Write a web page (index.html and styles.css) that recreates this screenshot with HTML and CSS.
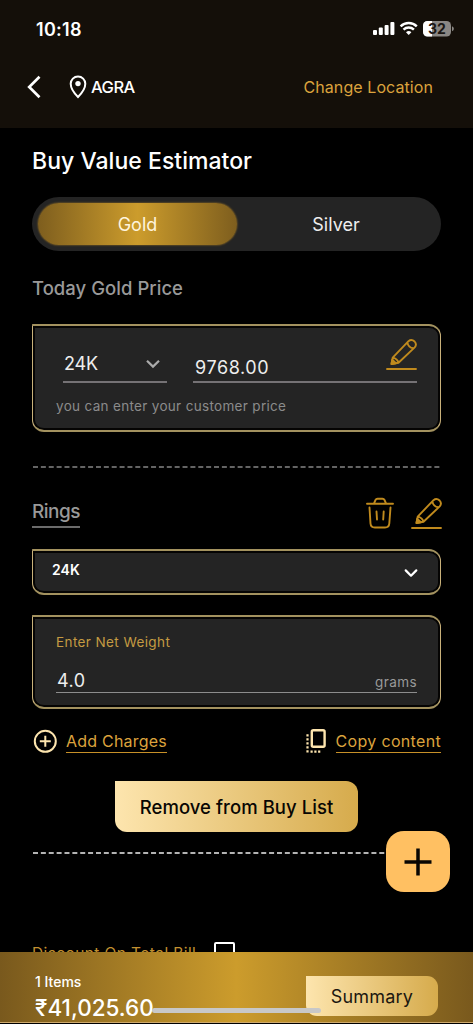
FILE: index.html
```html
<!DOCTYPE html>
<html lang="en">
<head>
<meta charset="utf-8">
<title>Buy Value Estimator</title>
<link rel="stylesheet" href="styles.css">
</head>
<body>
<div class="screen">
  <header class="top">
    <div class="status">
      <span class="time">10:18</span>
      <svg class="status-icons" width="82" height="18" viewBox="0 0 82 18">
        <g fill="#fff">
          <rect x="0" y="10" width="4" height="5" rx="1"/>
          <rect x="5.8" y="7.5" width="4" height="7.5" rx="1"/>
          <rect x="11.6" y="5" width="4" height="10" rx="1"/>
          <rect x="17.4" y="2" width="4" height="13" rx="1"/>
          <path d="M35.7 15 L33 12.3 A3.9 3.9 0 0 1 38.4 12.3 Z"/>
        </g>
        <path d="M30.5 9.6 A7.4 7.4 0 0 1 40.9 9.6 M27.6 6.3 A11.6 11.6 0 0 1 43.8 6.3" fill="none" stroke="#fff" stroke-width="2.4"/>
        <rect x="50" y="1" width="28" height="15.5" rx="4.5" fill="#8a8784"/>
        <path d="M54.5 1 H59 V16.500 H54.5 A4.500 4.500 0 0 1 50 12 V5.500 A4.500 4.500 0 0 1 54.5 1Z" fill="#fff"/>
        <path d="M79 6.300 A2.600 2.600 0 0 1 79 11.300Z" fill="#8a8784"/>
        <text class="battery" x="64" y="13.500" text-anchor="middle">32</text>
      </svg>
    </div>
    <div class="location">
      <svg class="back" width="14" height="24" viewBox="0 0 14 24"><path d="M12.500 1.800 L2.200 12 L12.500 22.200" fill="none" stroke="#fff" stroke-width="2.700"/></svg>
      <svg class="pin" width="18" height="24" viewBox="0 0 18 24"><path d="M9 22 C9 22 1.700 14.800 1.700 8.800 A7.300 7.300 0 0 1 16.300 8.800 C16.300 14.800 9 22 9 22Z" fill="none" stroke="#fff" stroke-width="2"/><circle cx="9" cy="8.600" r="2.700" fill="#fff"/></svg>
      <span class="city">AGRA</span>
      <span class="change">Change Location</span>
    </div>
  </header>

  <main class="content">
    <h1 class="title">Buy Value Estimator</h1>
    <div class="tabs">
      <div class="tab tab-active">Gold</div>
      <div class="tab">Silver</div>
    </div>
    <h2 class="subtitle">Today Gold Price</h2>

    <section class="card price-card">
      <div class="price-row">
        <div class="karat"><span>24K</span>
          <svg width="16" height="10" viewBox="0 0 16 10"><path d="M2 1.800 L8 7.600 L14 1.800" fill="none" stroke="#aaa" stroke-width="2.200"/></svg>
        </div>
        <div class="price"><span>9768.00</span>
          <svg class="pencil" width="31" height="32" viewBox="0 0 31 32"><use href="#pencil"/></svg>
        </div>
      </div>
      <p class="hint">you can enter your customer price</p>
    </section>

    <svg class="dash" width="409" height="2"><path d="M1 1 H409" stroke="#858585" stroke-width="1.700" stroke-dasharray="5 2.870"/></svg>

    <div class="item-head">
      <span class="item-name">Rings</span>
      <svg class="trash" width="28" height="32" viewBox="0 0 28 32" fill="none" stroke="#c08a1d" stroke-width="1.900" stroke-linecap="round" stroke-linejoin="round">
        <path d="M1 6.800 H27 M8 6.300 L9.500 3 Q10 1.800 11.500 1.800 H16.500 Q18 1.800 18.500 3 L20 6.300 M3.500 10.500 L4.500 26.500 Q4.800 30.500 8.800 30.500 H19 Q23 30.500 23.300 26.500 L24.500 10.500 M10.500 14.500 L11 22.500 M17.700 14.500 L17.200 22.500"/>
      </svg>
      <svg class="pencil" width="31" height="32" viewBox="0 0 31 32">
        <defs><g id="pencil" fill="none" stroke="#c08a1d" stroke-width="1.900" stroke-linecap="round" stroke-linejoin="round">
          <path d="M5.500 26 L6.700 19.600 L22.500 3.200 Q25.500 0.800 28.600 3.500 Q31.200 6.500 28.700 9.400 L12.500 24.700 Z M6.700 19.600 Q11.200 20.500 12.500 24.700 M21.500 4.500 Q22 9.500 27.500 10.300"/>
          <path d="M5.500 26 L6.200 21.800 L9.900 25.200Z" fill="#c08a1d"/>
          <path d="M1 31 H30"/>
        </g></defs>
        <use href="#pencil"/>
      </svg>
    </div>

    <div class="card karat-card"><span>24K</span>
      <svg width="16" height="12" viewBox="0 0 16 12"><path d="M2.700 3.400 L8 8.700 L13.300 3.400" fill="none" stroke="#fff" stroke-width="2.200" stroke-linecap="round" stroke-linejoin="round"/></svg>
    </div>

    <div class="card weight-card">
      <div class="weight-label">Enter Net Weight</div>
      <div class="weight-row"><span class="weight">4.0</span><span class="unit">grams</span></div>
    </div>

    <div class="links">
      <svg width="24" height="24" viewBox="0 0 24 24" fill="none" stroke="#fde5ae" stroke-width="2"><circle cx="12.300" cy="12.300" r="10.500"/><path d="M12.300 6.800 V17.800 M6.800 12.300 H17.800"/></svg>
      <span class="link add">Add Charges</span>
      <svg class="copy-icon" width="22" height="26" viewBox="0 0 22 26" fill="none" stroke="#fde5ae">
        <rect x="6.800" y="2.300" width="12.800" height="16.500" rx="1.500" stroke-width="2.400"/>
        <path d="M2.500 6.200 V24.700" stroke-width="2.200" stroke-dasharray="2.200 1.800"/><path d="M5.500 23.600 H16" stroke-width="2.200" stroke-dasharray="2.200 1.600"/>
      </svg>
      <span class="link copy">Copy content</span>
    </div>

    <button class="remove">Remove from Buy List</button>
    <svg class="dash dash-light" width="409" height="2"><path d="M1 1 H409" stroke="#eee" stroke-width="1.500" stroke-dasharray="5 2.870"/></svg>

    <div class="discount"><span>Discount On Total Bill</span><i class="checkbox"></i></div>
  </main>

  <button class="fab"><svg width="28" height="28" viewBox="0 0 28 28"><path d="M14 0.500 V27.500 M0.500 14 H27.500" stroke="#080603" stroke-width="3.500"/></svg></button>

  <footer class="bar">
    <div class="totals"><div class="count">1 Items</div><div class="amount">₹41,025.60</div></div>
    <button class="summary">Summary</button>
    <div class="home"></div>
  </footer>
</div>
</body>
</html>
```

FILE: styles.css
```css
* { box-sizing: border-box; margin: 0; padding: 0; }
body { background: #000; font-family: Inter, "Liberation Sans", sans-serif; }
svg { display: block; flex: none; }
button { border: 0; font-family: inherit; }
span { white-space: nowrap; }
.screen { position: relative; width: 473px; height: 1024px; overflow: hidden; background: #000; color: #fff; }
.top { height: 128px; background: #140f09; }
.status { display: flex; justify-content: space-between; align-items: center; height: 58px; padding: 0 18px 0 36px; }
.time { font-size: 18px; font-weight: 600; letter-spacing: 0.3px; }
.status-icons { margin-bottom: 1px; }
.battery { font-size: 14px; font-weight: 700; fill: #1b1713; }
.location { display: flex; align-items: center; height: 58px; padding: 0 40px 0 27px; }
.pin { margin-left: 28px; }
.city { margin-left: 4px; font-size: 16.5px; font-weight: 500; letter-spacing: -0.5px; }
.change { margin-left: auto; color: #dca33d; font-size: 16px; letter-spacing: 0.08px; }
.content { padding: 0 32px; }
.title { height: 69px; line-height: 66px; font-size: 23px; font-weight: 500; letter-spacing: 0.03px; }
.tabs { display: flex; width: 409px; height: 54px; padding: 6px; border-radius: 27px; background: #242424; }
.tab { display: flex; flex: 1; align-items: center; justify-content: center; height: 42px; border-radius: 21px; color: #eee; font-size: 18px; letter-spacing: 0; }
.tab-active { flex: none; width: 199px; color: #fff4dc; background: linear-gradient(90deg, #7e5e1e, #cc9c2c 50%, #7e5e1e); box-shadow: 0 0 2px #b58424; }
.subtitle { height: 73px; line-height: 75px; color: #999; font-size: 18.5px; font-weight: 500; letter-spacing: 0.03px; }
.card { width: 409px; border: 1px solid #c9b17a; border-width: 2px 1px; border-color: #a3925f #c9b17a; border-radius: 0 12px 12px 12px; background: #242424; box-shadow: inset 0 0 0 2px #050403; }
.price-card { height: 108px; padding-left: 23px; }
.price-row { display: flex; gap: 26px; padding-left: 7px; height: 57px; }
.karat, .price { display: flex; justify-content: space-between; height: 57px; border-bottom: 2px solid #757275; font-size: 18px; color: #eee; }
.karat { width: 104px; padding: 26px 6px 0 1px; }
.karat span { line-height: 24px; letter-spacing: -0.1px; }
.karat svg { margin-top: 7px; }
.price { width: 224px; padding: 12px 0 0 2px; }
.price span { padding-top: 18px; line-height: 24px; letter-spacing: 0.6px; }
.price .pencil { height: 32px; }
.hint { margin-top: 13px; line-height: 20px; color: #8b8b8b; font-size: 13.5px; letter-spacing: 0.32px; }
.dash { margin-top: 34px; }
.item-head { display: flex; align-items: flex-start; height: 81px; padding-top: 29px; }
.item-name { height: 31px; line-height: 30px; border-bottom: 2px solid #6b6b6b; color: #999; font-size: 19px; font-weight: 500; letter-spacing: -0.5px; }
.trash { margin-left: auto; }
.item-head .pencil { margin-left: 17px; margin-right: -1px; }
.karat-card { display: flex; align-items: center; justify-content: space-between; height: 46px; padding: 0 21px 0 18px; font-size: 14px; font-weight: 600; letter-spacing: 0.1px; }
.karat-card span { margin: 0 0 5px 1px; }
.karat-card svg { margin-top: 2px; }
.weight-card { height: 94px; margin-top: 20px; padding: 15px 23px 0; }
.weight-label { line-height: 20px; color: #c59b42; font-size: 13.5px; letter-spacing: 0.4px; }
.weight-row { display: flex; justify-content: space-between; align-items: baseline; height: 41px; padding-top: 17px; border-bottom: 1px solid #8d8d8d; }
.weight { padding-left: 1px; color: #eee; font-size: 18px; line-height: 24px; letter-spacing: 0.5px; }
.unit { color: #999; font-size: 13.5px; letter-spacing: 0.4px; }
.links { display: flex; align-items: center; height: 26px; margin-top: 19px; padding-left: 1px; }
.link { height: 24px; line-height: 24px; border-bottom: 1px solid #c79028; color: #dca33d; font-size: 16px; letter-spacing: 0.22px; }
.add { margin-left: 9px; }
.copy-icon { margin-left: auto; }
.copy { margin-left: 9px; letter-spacing: 0.32px; }
.remove { display: block; width: 243px; height: 51px; margin: 27px 0 0 83px; padding-top: 1px; border-radius: 0 12px 12px 12px; background: linear-gradient(90deg, #fde5ae, #d6ab4c); color: #080603; font-size: 18.5px; font-weight: 500; letter-spacing: 0.05px; }
.dash-light { margin-top: 20px; }
.discount { display: flex; gap: 18px; margin-top: 87px; color: #c29030; font-size: 15.5px; line-height: 26px; letter-spacing: 0.38px; }
.checkbox { width: 21px; height: 21px; border: 2px solid #fff; border-radius: 2px; margin-top: 1px; }
.fab { position: absolute; left: 386px; top: 831px; display: grid; place-items: center; width: 64px; height: 61px; border-radius: 18px; background: #ffc062; }
.bar { position: absolute; left: 0; bottom: 1px; display: flex; justify-content: space-between; width: 473px; height: 71px; padding: 24px 35px 0; background: linear-gradient(90deg, #79591d, #cc9c2c 50%, #79591d); border-bottom: 1px solid #cda96d; }
.count { height: 24px; line-height: 11px; font-size: 14px; font-weight: 500; }
.amount { line-height: 16px; font-size: 22.5px; font-weight: 500; }
.summary { width: 132px; height: 40px; border-radius: 0 11px 11px 11px; background: linear-gradient(90deg, #fde5ae, #d6ab4c); color: #1b1710; font-size: 18px; letter-spacing: 0.2px; }
.home { position: absolute; left: 152px; top: 56px; width: 169px; height: 5px; border-radius: 3px; background: #c8c8c8; }
```
